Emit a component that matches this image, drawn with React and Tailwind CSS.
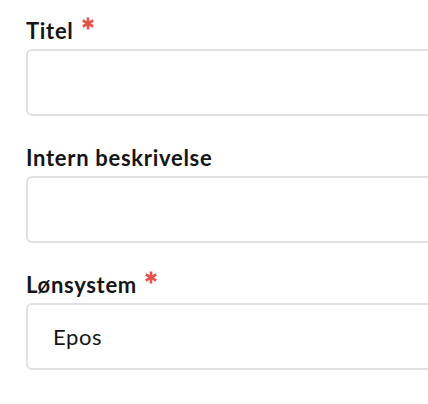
import React from "react";

function Asterisk() {
  return (
    <svg width="12" height="13" viewBox="0 0 12 13" className="ml-[8px]" aria-hidden="true">
      <g stroke="#e5534b" strokeWidth="2.6" strokeLinecap="butt">
        <line x1="6" y1="0.5" x2="6" y2="12.5" />
        <line x1="0.8" y1="3.5" x2="11.2" y2="9.5" />
        <line x1="0.8" y1="9.5" x2="11.2" y2="3.5" />
      </g>
    </svg>
  );
}

function Field({ label, required, value }) {
  return (
    <div className="flex flex-col">
      <label className="flex items-start h-[28px] mb-[4px] text-[22px] leading-[28px] font-bold tracking-[0.7px] text-[#151515]">
        <span>{label}</span>
        {required && <Asterisk />}
      </label>
      <div className="h-[67px] w-[440px] border-2 border-[#e1e1e1] rounded-[6px] bg-white flex items-center pl-[25px] text-[22px] tracking-[0.6px] text-[#151515]">
        {value}
      </div>
    </div>
  );
}

export default function App() {
  return (
    <div
      className="w-[428px] h-[404px] overflow-hidden bg-white pl-[26px] pt-[17px] flex flex-col gap-[28px]"
      style={{ fontFamily: "Lato, 'Open Sans', sans-serif" }}
    >
      <Field label="Titel" required />
      <Field label="Intern beskrivelse" />
      <Field label="Lønsystem" required value="Epos" />
    </div>
  );
}
